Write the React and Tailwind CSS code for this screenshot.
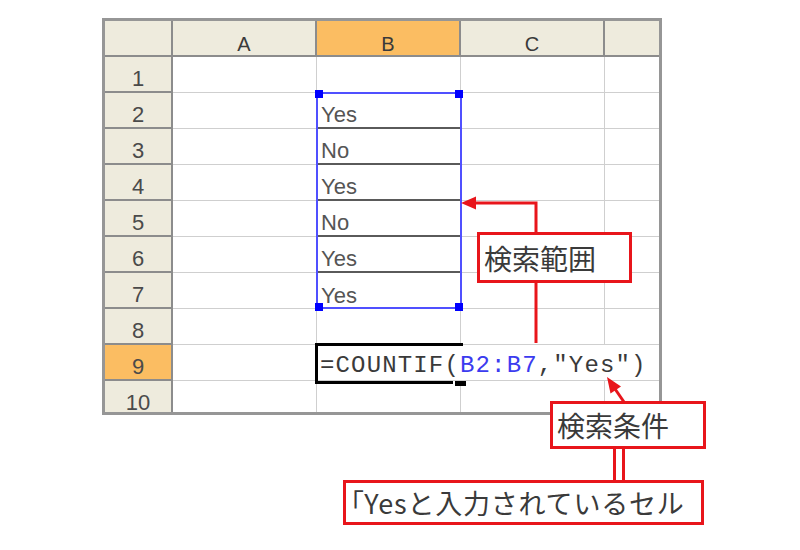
import React from "react";

const HDR = "bg-[#eeebdd] border-r-2 border-b-2 border-[#8c8c8c] flex items-end justify-center pb-[1px] text-[20px] leading-none text-[#3a3a3a]";
const HDR_SEL = "bg-[#fbbd62] border-r-2 border-b-2 border-[#8c8c8c] flex items-end justify-center pb-[1px] text-[20px] leading-none text-[#3a3a3a]";
const HDR_LAST = "bg-[#eeebdd] border-b-2 border-[#8c8c8c]";
const ROWH = "bg-[#eeebdd] border-r-2 border-b-2 border-[#8c8c8c] flex items-end justify-center pb-[1px] text-[22px] leading-none text-[#4a4a4a]";
const ROWH_SEL = "bg-[#fbbd62] border-r-2 border-b-2 border-[#8c8c8c] flex items-end justify-center pb-[1px] text-[22px] leading-none text-[#4a4a4a]";
const CELL = "bg-white border-r border-b border-r-[#cfcfcf] border-b-[#cfcfcf] flex items-end pl-[4px] pb-[1px] text-[22px] leading-none text-[#555]";
const CELL_DARK = "bg-white border-r border-b-2 border-r-[#cfcfcf] border-b-[#5a5a5a] flex items-end pl-[4px] pb-[1px] text-[22px] leading-none text-[#555]";
const CELL_LAST = "bg-white border-b border-b-[#cfcfcf]";

const bValues = { 2: "Yes", 3: "No", 4: "Yes", 5: "No", 6: "Yes", 7: "Yes" };

function Row({ n }) {
  if (n === 9) {
    return (
      <>
        <div className={ROWH_SEL}>{n}</div>
        <div className={CELL}></div>
        <div className="border-b border-b-[#cfcfcf] flex items-end pl-[3px] pb-[2px] whitespace-nowrap font-['Liberation_Mono',monospace] text-[24px] leading-none tracking-[1.15px] text-[#3a3a3a]">
          <span>
            =COUNTIF(<span className="text-[#3b3bef]">B2:B7</span>,"Yes")
          </span>
        </div>
        <div className="border-b border-b-[#cfcfcf]"></div>
        <div className="border-b border-b-[#cfcfcf]"></div>
      </>
    );
  }
  const dark = n >= 2 && n <= 6;
  return (
    <>
      <div className={ROWH}>{n}</div>
      <div className={CELL}></div>
      <div className={dark ? CELL_DARK : CELL}>{bValues[n] || ""}</div>
      <div className={CELL}></div>
      <div className={CELL_LAST}></div>
    </>
  );
}

export default function App() {
  const rows = [1, 2, 3, 4, 5, 6, 7, 8, 9, 10];
  return (
    <div className="relative w-[800px] h-[550px] bg-white overflow-hidden font-['Liberation_Sans',Arial,sans-serif]">
      <div className="pt-[18px] pl-[102px]">
        <div className="w-[560px] h-[397px] border-[3px] border-[#969696]">
          <div className="relative h-[391px] overflow-hidden bg-white grid grid-cols-[68px_144px_144px_144px_1fr] auto-rows-[36px]">
            <div className={HDR}></div>
            <div className={HDR}>A</div>
            <div className={HDR_SEL}>B</div>
            <div className={HDR}>C</div>
            <div className={HDR_LAST}></div>
            {rows.map((n) => (
              <Row key={n} n={n} />
            ))}

            {/* selection range B2:B7 */}
            <div className="absolute left-[211px] top-[71px] w-[146px] h-[217px] border-2 border-[#5050ff]"></div>
            <div className="absolute left-[210px] top-[69px] w-[8px] h-[8px] bg-[#0000ff]"></div>
            <div className="absolute left-[350px] top-[69px] w-[8px] h-[8px] bg-[#0000ff]"></div>
            <div className="absolute left-[210px] top-[282px] w-[8px] h-[8px] bg-[#0000ff]"></div>
            <div className="absolute left-[350px] top-[282px] w-[8px] h-[8px] bg-[#0000ff]"></div>

            {/* active cell B9 */}
            <div className="absolute left-[210px] top-[322px] w-[148px] h-[3px] bg-black"></div>
            <div className="absolute left-[210px] top-[322px] w-[3px] h-[41px] bg-black"></div>
            <div className="absolute left-[210px] top-[360px] w-[138px] h-[3px] bg-black"></div>
            <div className="absolute left-[350px] top-[360px] w-[11px] h-[5px] bg-black"></div>
          </div>
        </div>
      </div>

      {/* callout lines */}
      <svg className="absolute left-0 top-0 pointer-events-none" width="800" height="550" viewBox="0 0 800 550">
        <polyline points="536,233 536,203 472,203" fill="none" stroke="#e8151b" strokeWidth="3" />
        <polygon points="461,203 476,196.5 476,209.5" fill="#e8151b" />
        <line x1="536" y1="282" x2="536" y2="343" stroke="#e8151b" strokeWidth="3" />
        <line x1="624" y1="402" x2="613" y2="386" stroke="#e8151b" strokeWidth="3" />
        <polygon points="607,377 621,386.5 610.5,393.5" fill="#e8151b" />
        <line x1="614.5" y1="448" x2="614.5" y2="481" stroke="#e8151b" strokeWidth="3" />
        <line x1="623.5" y1="448" x2="623.5" y2="481" stroke="#e8151b" strokeWidth="3" />
      </svg>

      <div className="absolute left-[477px] top-[232px] w-[155px] h-[51px] border-[3px] border-[#e8151b] bg-white flex items-center pl-[4px] font-['Noto_Sans_CJK_JP',sans-serif] text-[28px] leading-none text-[#3a3a3a]">
        検索範囲
      </div>
      <div className="absolute left-[550px] top-[401px] w-[156px] h-[48px] border-[3px] border-[#e8151b] bg-white flex items-center pl-[4px] font-['Noto_Sans_CJK_JP',sans-serif] text-[28px] leading-none text-[#3a3a3a]">
        検索条件
      </div>
      <div className="absolute left-[343px] top-[480px] w-[361px] h-[45px] border-[3px] border-[#e8151b] bg-white flex items-center pl-[4px] whitespace-nowrap font-['Noto_Sans_CJK_JP',sans-serif] text-[27px] leading-none tracking-[0.8px] text-[#3a3a3a]">
        <span className="[font-feature-settings:'palt']">「</span>Yesと入力されているセル
      </div>
    </div>
  );
}
